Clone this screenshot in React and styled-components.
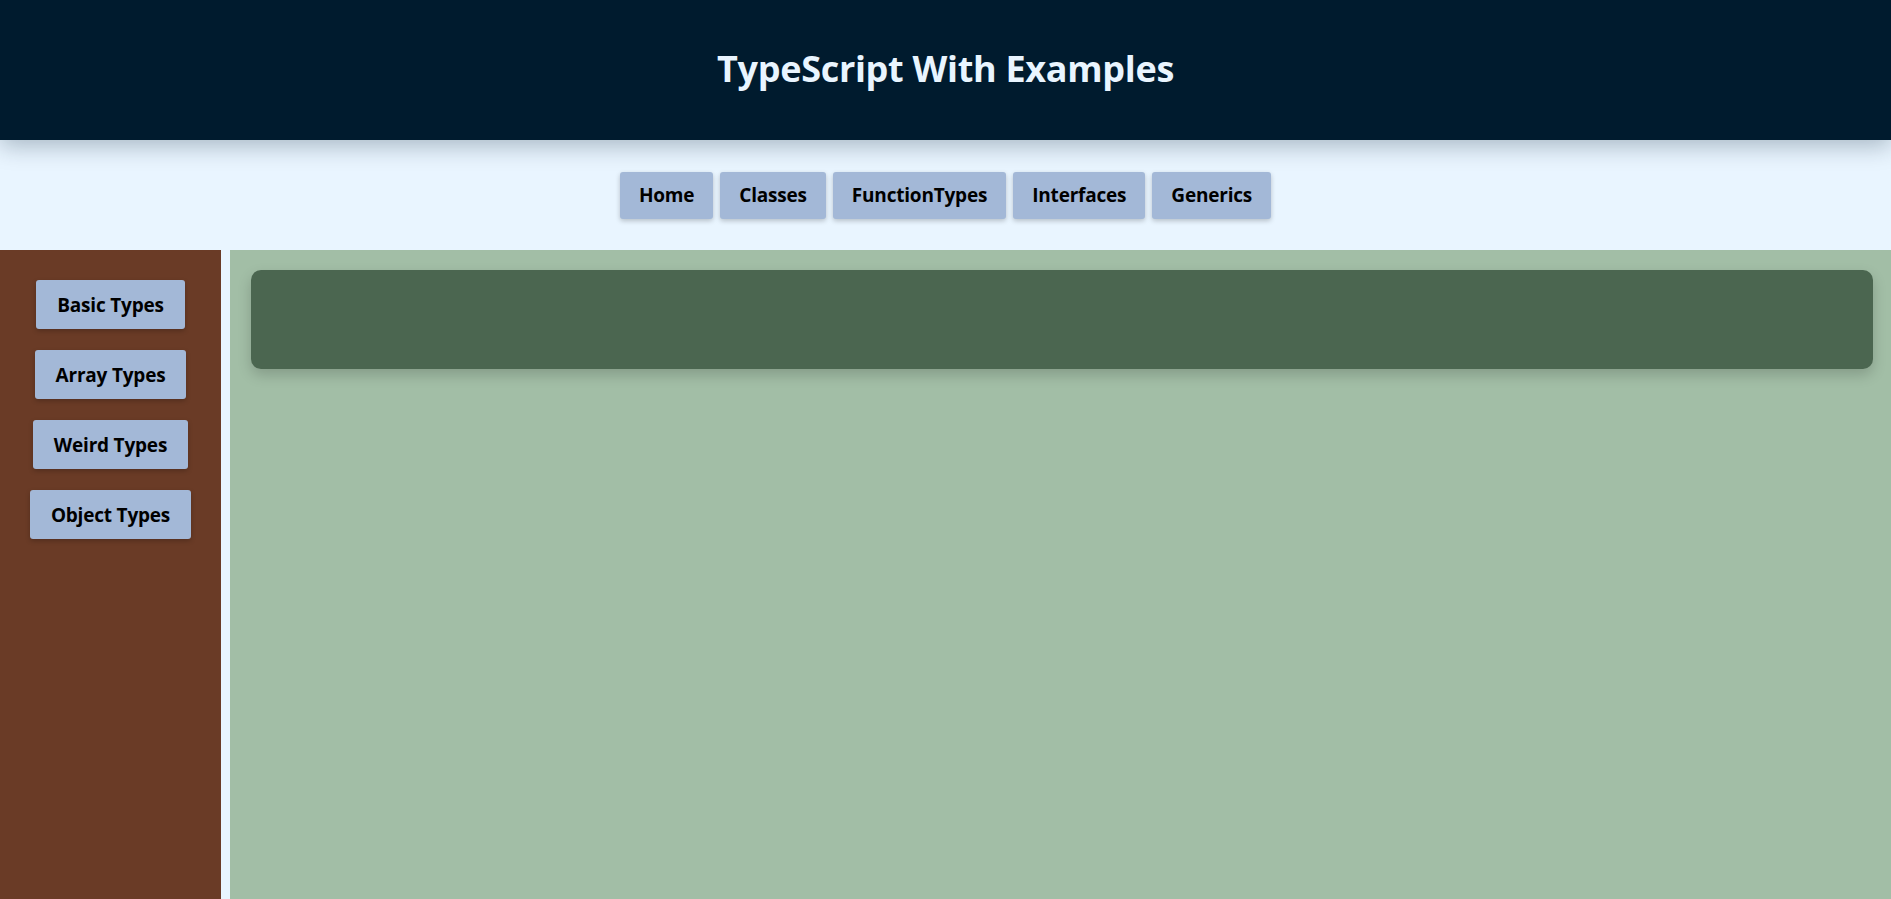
import React from "react";
import styled, { createGlobalStyle } from "styled-components";

const Global = createGlobalStyle`
  html, body { margin: 0; padding: 0; }
  body {
    font-family: "Open Sans", "Noto Sans", sans-serif;
    background: #e9f5ff;
    overflow: hidden;
  }
`;

const Page = styled.div`
  display: flex;
  flex-direction: column;
  min-height: 100vh;
`;

const Header = styled.header`
  position: relative;
  z-index: 2;
  height: 140px;
  box-sizing: border-box;
  padding-bottom: 4px;
  background: #001b2e;
  display: flex;
  align-items: center;
  justify-content: center;
  box-shadow: 0 6px 22px rgba(0, 27, 46, 0.28);
`;

const Title = styled.h1`
  margin: 0;
  color: #e9f5ff;
  font-size: 36px;
  font-weight: 700;
  letter-spacing: -0.3px;
`;

const Nav = styled.nav`
  height: 110px;
  background: #e9f5ff;
  display: flex;
  align-items: center;
  justify-content: center;
  gap: 7px;
`;

const Button = styled.button`
  font-family: inherit;
  font-weight: 700;
  font-size: 19px;
  color: #000;
  background: #a3b8d7;
  border: none;
  border-radius: 3px;
  height: ${(p) => p.$h}px;
  padding: 0 ${(p) => p.$px}px;
  box-shadow: 0 2px 5px rgba(0, 0, 0, 0.22);
  cursor: pointer;
  letter-spacing: -0.2px;
`;

const Body = styled.div`
  flex: 1;
  display: flex;
  gap: 9px;
`;

const Sidebar = styled.aside`
  width: 221px;
  background: #6a3b26;
  display: flex;
  flex-direction: column;
  align-items: center;
  gap: 21px;
  padding-top: 30px;
`;

const Main = styled.main`
  flex: 1;
  background: #a2bea6;
  padding: 20px 18px 20px 21px;
`;

const Card = styled.div`
  height: 99px;
  background: #4b6650;
  border-radius: 10px;
  box-shadow: 0 6px 14px rgba(0, 0, 0, 0.18);
`;

const navItems = ["Home", "Classes", "FunctionTypes", "Interfaces", "Generics"];
const sideItems = ["Basic Types", "Array Types", "Weird Types", "Object Types"];

export default function App() {
  return (
    <>
      <Global />
      <Page>
        <Header>
          <Title>TypeScript With Examples</Title>
        </Header>
        <Nav>
          {navItems.map((t) => (
            <Button key={t} $h={47} $px={19}>
              {t}
            </Button>
          ))}
        </Nav>
        <Body>
          <Sidebar>
            {sideItems.map((t) => (
              <Button key={t} $h={49} $px={21}>
                {t}
              </Button>
            ))}
          </Sidebar>
          <Main>
            <Card />
          </Main>
        </Body>
      </Page>
    </>
  );
}
